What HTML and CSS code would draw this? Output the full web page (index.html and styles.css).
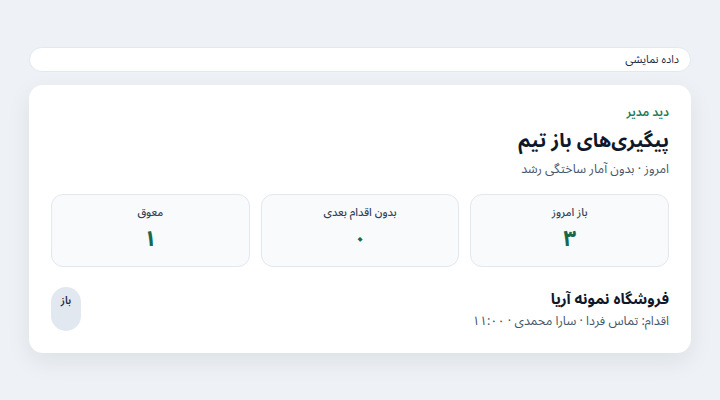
FILE: index.html
```html
<!DOCTYPE html>
<html lang="fa" dir="rtl">
<head>
<meta charset="utf-8">
<link rel="stylesheet" href="styles.css">
</head>
<body>
<div class="page">
  <div class="notice">داده نمایشی</div>
  <div class="card">
    <div class="eyebrow">دید مدیر</div>
    <h1 class="title">پیگیری‌های باز تیم</h1>
    <div class="sub">امروز · بدون آمار ساختگی رشد</div>
    <div class="stats">
      <div class="stat"><div class="stat-label">باز امروز</div><div class="stat-value">۳</div></div>
      <div class="stat"><div class="stat-label">بدون اقدام بعدی</div><div class="stat-value">۰</div></div>
      <div class="stat"><div class="stat-label">معوق</div><div class="stat-value">۱</div></div>
    </div>
    <div class="item">
      <div class="item-main">
        <div class="item-title">فروشگاه نمونه آریا</div>
        <div class="item-sub">اقدام: تماس فردا · سارا محمدی · ۱۱:۰۰</div>
      </div>
      <div class="badge">باز</div>
    </div>
  </div>
</div>
</body>
</html>
```
FILE: styles.css
```css
* { box-sizing: border-box; }
html, body { margin: 0; padding: 0; }
body {
  background: #eef2f6;
  font-family: "Noto Sans Arabic", "Noto Sans", sans-serif;
  color: #0f172a;
  width: 720px;
  height: 400px;
}
.page {
  padding: 47px 29px 0 29px;
  display: flex;
  flex-direction: column;
  gap: 13px;
}
.notice {
  background: #fff;
  border: 1px solid #e2e8f0;
  border-radius: 13px;
  height: 25px;
  padding: 0 11px;
  font-size: 11px;
  line-height: 23px;
  color: #1e293b;
}
.card {
  background: #fff;
  border-radius: 14px;
  box-shadow: 0 8px 24px rgba(15, 23, 42, 0.08);
  padding: 19px 22px 20px 22px;
  height: 268px;
}
.eyebrow {
  color: #1d7a57;
  font-size: 12px;
  font-weight: 600;
  line-height: 18px;
}
.title {
  margin: 5px 0 0 0;
  font-size: 19.5px;
  font-weight: 700;
  line-height: 28px;
}
.sub {
  margin-top: 4px;
  font-size: 12.5px;
  color: #475569;
  line-height: 20px;
}
.stats {
  margin-top: 15px;
  display: grid;
  grid-template-columns: 1fr 1fr 1fr;
  gap: 11px;
}
.stat {
  background: #f8fafc;
  border: 1px solid #e2e8f0;
  border-radius: 12px;
  height: 73px;
  display: flex;
  flex-direction: column;
  align-items: center;
  padding-top: 9px;
}
.stat-label {
  font-size: 11px;
  font-weight: 500;
  color: #334155;
  line-height: 18px;
}
.stat-value {
  margin-top: 1px;
  font-size: 22px;
  font-weight: 700;
  color: #17694d;
  line-height: 32px;
}
.item {
  margin-top: 20px;
  display: flex;
  justify-content: space-between;
  align-items: stretch;
}
.item-title {
  font-size: 15px;
  font-weight: 700;
  line-height: 24px;
}
.item-sub {
  margin-top: 0;
  font-size: 12.5px;
  color: #475569;
  line-height: 20px;
}
.badge {
  background: #e2e8f0;
  border-radius: 15px;
  width: 30px;
  font-size: 10.5px;
  font-weight: 600;
  text-align: center;
  padding-top: 3px;
  color: #1e293b;
  height: 44px;
}
```
